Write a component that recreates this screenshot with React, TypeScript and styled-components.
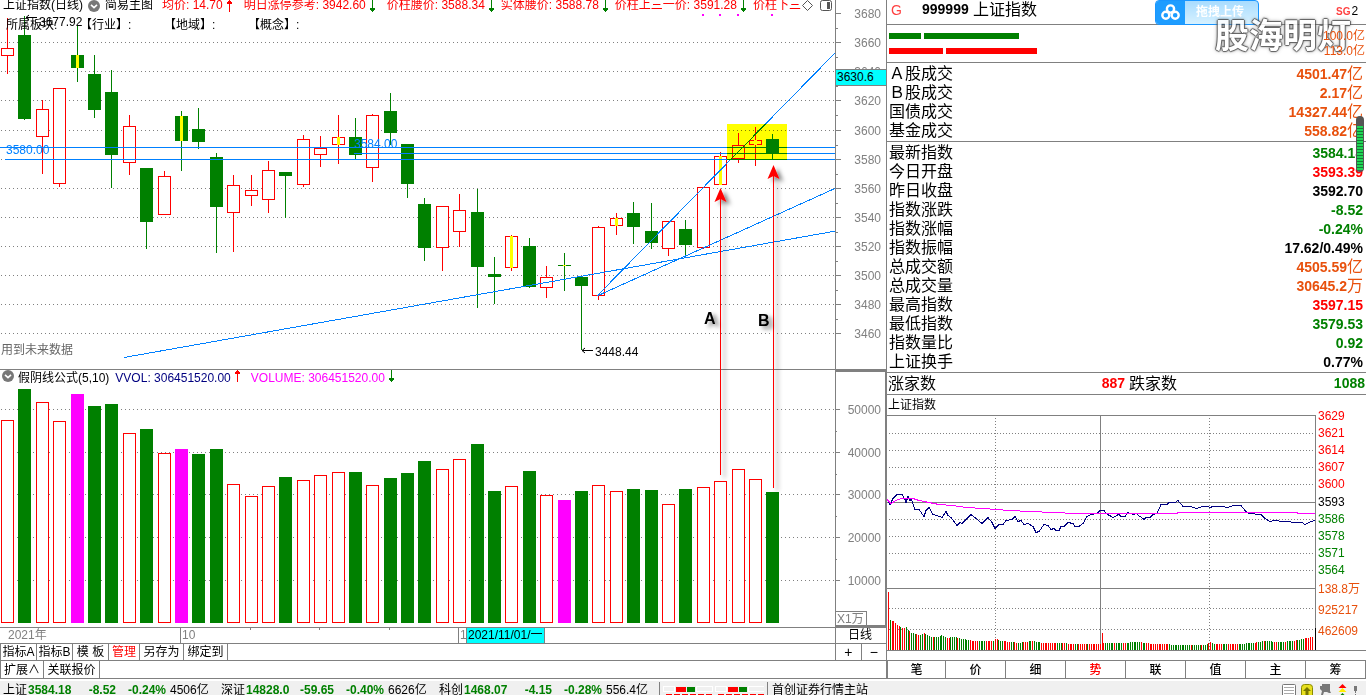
import React from "react";
import styled, { createGlobalStyle } from "styled-components";

const FONT = '"Liberation Sans", "Noto Sans CJK SC", sans-serif';
const RED = "#ff0000";
const GREEN = "#008000";
const GRAY = "#808080";
const BLUE = "#0080ff";
const ORANGE = "#e8500c";
const MAGENTA = "#ff00ff";
const NAVY = "#000080";

const GlobalStyle = createGlobalStyle`
  * { box-sizing: border-box; }
  body { margin: 0; background: #fff; color: #000; font: 12px/14px ${FONT}; }
  button { font: inherit; color: inherit; background: none; border: 0; padding: 0; margin: 0; cursor: pointer; }
  svg { display: block; flex: none; }
  svg text { font-family: ${FONT}; font-size: 12px; }
`;

/* ---------- frame ---------- */

const Terminal = styled.div`
  height: 100vh;
  overflow: hidden;
  display: flex;
  flex-direction: column;
`;
const Workspace = styled.main`
  display: grid;
  grid-template-columns: minmax(0, 1fr) 480px;
  flex: none;
`;
const Charts = styled.section`
  position: relative;
  display: flex;
  flex-direction: column;
  min-width: 0;
`;
const Pane = styled.div`
  display: grid;
  grid-template-columns: minmax(0, 1fr) 51px;
`;
const PricePane = styled(Pane)`
  height: 370px;
  border-bottom: 1px solid ${GRAY};
`;
const VolumePane = styled(Pane)`
  height: 257px;
`;
const Canvas = styled.div`
  position: relative;
  min-width: 0;
  overflow: hidden;
`;
const Plot = styled.svg`
  width: 100%;
  overflow: hidden;
`;
const Overlay = styled.svg`
  position: absolute;
  left: 0;
  top: 0;
  pointer-events: none;
`;
const PriceAxis = styled.div`
  position: relative;
  border-left: 1px solid ${GRAY};
`;
const PriceTag = styled.div`
  position: absolute;
  left: 0;
  right: 0;
  top: 69px;
  height: 17px;
  line-height: 15px;
  padding-left: 1px;
  background: #00ffff;
  border: solid ${GRAY};
  border-width: 1px 0;
`;
const VolumeAxis = styled.div`
  position: relative;
  border: 2px solid ${GRAY};
  border-left-width: 1px;
  margin-right: -1px;
`;
const Unit = styled.div`
  position: absolute;
  left: 0;
  bottom: 0;
  width: 31px;
  height: 14px;
  line-height: 15px;
  padding-left: 1px;
  color: ${GRAY};
  border: solid ${GRAY};
  border-width: 1px 1px 0 0;
`;

/* ---------- legends ---------- */

const Legend = styled.div`
  display: flex;
  white-space: nowrap;
`;
const PriceLegend = styled(Legend)`
  position: absolute;
  left: 0;
  right: 0;
  top: 0;
  height: 10px;
  line-height: 10px;
  padding: 0 3px;
`;
const LegendItems = styled.div`
  display: flex;
  flex: 1;
  min-width: 0;
  overflow: hidden;
  height: 12px;
  gap: 6px;
`;
const LegendTools = styled.div`
  display: flex;
  gap: 7px;
  padding-left: 1px;
  background: #fff;
`;
const ToolButton = styled.button`
  display: block;
  height: 12px;
`;
const VolumeLegend = styled(Legend)`
  height: 16px;
  line-height: 16px;
  padding-left: 2px;
`;
const Name = styled.span`
  display: flex;
  gap: 4px;
`;
const MainName = styled(Name)`
  gap: 5px;
  margin-right: 3px;
`;
const Reading = styled.span<{ $color: string; $wide?: boolean }>`
  display: flex;
  flex: none;
  gap: 3px;
  margin-right: ${(p) => (p.$wide ? 5 : 0)}px;
  color: ${(p) => p.$color};
`;
const VolumeReading = styled(Reading)`
  margin-left: 6px;
  & + & { margin-left: 10px; }
`;
const SectorLine = styled.div`
  position: absolute;
  left: 6px;
  top: 18px;
  white-space: pre;
  display: flex;
`;
const Sector = styled.span<{ $first?: boolean }>`
  width: ${(p) => (p.$first ? 74 : 84)}px;
`;

const Disc = () => (
  <svg width="12" height="12" viewBox="0 0 12 12">
    <circle cx="6" cy="6" r="6" fill="#787878" />
    <path d="M3 4.8 6 7.6 9 4.8" fill="none" stroke="#fff" strokeWidth="1.6" />
  </svg>
);
const Trend = ({ up }: { up?: boolean }) => (
  <svg width="7" height="12" viewBox="0 0 7 12" shapeRendering="crispEdges">
    {up ? (
      <path d="M3 0h1v1h1v1h1v2H4v8H3V4H1V2h1V1h1z" fill={RED} />
    ) : (
      <path d="M3 0h1v8h2v2H5v1H4v1H3v-1H2v-1H1V8h2z" fill={GREEN} />
    )}
  </svg>
);

/* ---------- price chart ---------- */

type Kind = "r" | "g" | "ry" | "gy";
type Candle = [Kind, number, number, number, number];

// kind, wick top, body top, body bottom, wick bottom
const CANDLES: Candle[] = [
  ["r", 18, 48, 56, 74], ["g", 16, 35, 119, 120], ["r", 100, 109, 137, 174], ["r", 88, 88, 184, 187],
  ["gy", 26, 55, 68, 82], ["g", 55, 74, 110, 118], ["g", 70, 92, 155, 188], ["r", 115, 126, 163, 175],
  ["g", 168, 168, 222, 249], ["r", 171, 176, 215, 215], ["gy", 111, 116, 141, 171], ["g", 108, 129, 142, 149],
  ["g", 153, 157, 207, 253], ["r", 175, 185, 213, 252], ["r", 175, 190, 196, 206], ["r", 161, 170, 200, 213],
  ["g", 172, 172, 176, 218], ["r", 135, 139, 185, 187], ["r", 136, 148, 155, 167], ["ry", 115, 137, 145, 164],
  ["g", 118, 137, 155, 159], ["r", 114, 115, 168, 182], ["g", 93, 111, 133, 145], ["g", 144, 144, 184, 198],
  ["g", 198, 204, 248, 261], ["r", 206, 206, 248, 271], ["r", 194, 210, 232, 247], ["g", 189, 212, 267, 308],
  ["g", 257, 274, 277, 304], ["ry", 235, 236, 268, 271], ["g", 238, 246, 287, 288], ["r", 266, 277, 288, 298],
  ["gy", 253, 265, 266, 291], ["g", 277, 277, 286, 350], ["r", 226, 227, 296, 300], ["ry", 213, 218, 226, 235],
  ["g", 202, 213, 227, 244], ["g", 203, 231, 243, 249], ["r", 221, 221, 249, 256], ["g", 220, 229, 245, 256],
  ["r", 187, 187, 248, 249], ["ry", 152, 156, 185, 185], ["r", 133, 145, 159, 163], ["ry", 127, 140, 145, 166],
  ["g", 134, 139, 154, 160],
];
const PRICE_GRID = [42, 71, 100, 130, 159, 188, 217, 246, 275, 304, 333];
const slot = (i: number) => Math.round(1 + 17.395 * i);

const Dotted = ({ y }: { y: number }) => (
  <line x1="1" x2="100%" y1={y + 0.5} y2={y + 0.5} stroke={GRAY} strokeDasharray="1 3" />
);

const CandleMark = ({ data, x }: { data: Candle; x: number }) => {
  const [kind, high, top, bottom, low] = data;
  const red = kind[0] === "r";
  const color = red ? RED : GREEN;
  return (
    <g>
      <rect x={x + 6} y={high} width="1" height={low - high} fill={color} />
      {red ? (
        <rect x={x + 0.5} y={top + 0.5} width="12" height={bottom - top - 1} fill="#fff" stroke={RED} />
      ) : (
        <rect x={x} y={top} width="13" height={bottom - top} fill={GREEN} />
      )}
      {kind.length > 1 && <rect x={x + 5} y={top} width="3" height={bottom - top} fill="#ffff00" />}
    </g>
  );
};

const PriceChart = () => (
  <Plot height="369" role="img" aria-label="上证指数日线">
    <g shapeRendering="crispEdges">
      {PRICE_GRID.map((y) => <Dotted key={y} y={y} />)}
      {CANDLES.map((c, i) => <CandleMark key={i} data={c} x={slot(i)} />)}
      {[702, 719, 737, 771].map((x) => <rect key={x} x={x} y="14" width="2" height="2" fill={MAGENTA} />)}
      <g stroke={BLUE}>
        <line x1="0" x2="100%" y1="147.5" y2="147.5" />
        <line x1="354" x2="100%" y1="153.5" y2="153.5" />
        <line x1="5" x2="100%" y1="159.5" y2="159.5" />
        <line x1="124" y1="357.5" x2="836" y2="231" />
        <line x1="597" y1="296" x2="836" y2="188" />
        <line x1="597" y1="296" x2="836" y2="52" />
      </g>
    </g>
    <text x="6" y="154" fill={BLUE}>3580.00</text>
    <text x="354" y="148" fill={BLUE}>3584.00</text>
    <text x="39" y="26">3677.92</text>
    <path d="M26 17.5h11M29 15l-3 2.5 3 2.5" fill="none" stroke="#000" />
    <text x="595" y="356">3448.44</text>
    <path d="M582 350.5h11M585 348l-3 2.5 3 2.5" fill="none" stroke="#000" />
    <text x="1" y="354" fill="#666">用到未来数据</text>
    <rect x="727" y="124" width="60" height="36" fill="#ffff00" style={{ mixBlendMode: "multiply" }} />
  </Plot>
);

const PriceScale = () => (
  <svg width="50" height="369">
    <g fill={GRAY} shapeRendering="crispEdges">
      {[13, ...PRICE_GRID].map((y) => <rect key={y} x="0" y={y} width="5" height="1" />)}
      {[13, ...PRICE_GRID].slice(0, -1).map((y) => <rect key={y} x="0" y={y + 15} width="2" height="1" />)}
    </g>
    {[13, ...PRICE_GRID].map((y, i) => (
      <text key={y} x="45" y={y + 5} textAnchor="end" fill={GRAY}>{3680 - i * 20}</text>
    ))}
  </svg>
);

/* ---------- volume chart ---------- */

const VOLUMES: number[] = [
  203, 234, 221, 202, 229, 217, 219, 190, 194, 170, 174, 169, 174, 139, 127, 137, 146, 143, 148, 151, 151, 138,
  145, 150, 162, 154, 164, 179, 132, 137, 152, 128, 123, 132, 138, 132, 134, 133, 119, 134, 136, 142, 154, 144, 131,
];
const SPIKES = new Set([4, 10, 32]);
const VOLUME_GRID = [23, 66, 108, 151, 194];

const VolumeChart = () => (
  <Plot height="241" role="img" aria-label="成交量" shapeRendering="crispEdges">
    {VOLUME_GRID.map((y) => <Dotted key={y} y={y} />)}
    {VOLUMES.map((h, i) => {
      const x = slot(i);
      return CANDLES[i][0][0] === "r" ? (
        <rect key={i} x={x + 0.5} y={237.5 - h} width="12" height={h - 1} fill="#fff" stroke={RED} />
      ) : (
        <rect key={i} x={x} y={237 - h} width="13" height={h} fill={SPIKES.has(i) ? MAGENTA : GREEN} />
      );
    })}
  </Plot>
);

const VolumeScale = () => (
  <svg width="48" height="253">
    <g fill={GRAY} shapeRendering="crispEdges">
      {VOLUME_GRID.map((y) => <rect key={y} x="0" y={y + 14} width="4" height="1" />)}
      {VOLUME_GRID.slice(0, -1).map((y) => <rect key={y} x="0" y={y + 36} width="1" height="1" />)}
    </g>
    {VOLUME_GRID.map((y, i) => (
      <text key={y} x="45" y={y + 19} textAnchor="end" fill={GRAY}>{50000 - i * 10000}</text>
    ))}
  </svg>
);

const Pointer = ({ x, top, bottom }: { x: number; top: number; bottom: number }) => (
  <g filter="url(#drop)" fill={RED}>
    <rect x={x} y={top + 8} width="1" height={bottom - top - 8} shapeRendering="crispEdges" />
    <path d={`M${x + 0.5} ${top}l6 14-6-3-6 3z`} />
  </g>
);

const Annotations = () => (
  <Overlay width="836" height="500">
    <defs>
      <filter id="drop" filterUnits="userSpaceOnUse" x="690" y="150" width="130" height="350">
        <feDropShadow dx="4" dy="3" stdDeviation="2" floodColor="#000" floodOpacity="0.5" />
      </filter>
    </defs>
    <Pointer x={720} top={188} bottom={475} />
    <Pointer x={773} top={165} bottom={488} />
    <g filter="url(#drop)">
      <text x="704" y="324" style={{ fontSize: 16, fontWeight: 700 }}>A</text>
      <text x="758" y="326" style={{ fontSize: 16, fontWeight: 700 }}>B</text>
    </g>
  </Overlay>
);

/* ---------- time line and button rows ---------- */

const Timeline = styled(Pane)`
  height: 16px;
  border-top: 1px solid ${GRAY};
  line-height: 15px;
`;
const Months = styled.div`
  position: relative;
  display: flex;
  color: ${GRAY};
  min-width: 0;
  overflow: hidden;
`;
const Month = styled.div<{ $width: number; $rule?: boolean }>`
  flex: none;
  width: ${(p) => p.$width}px;
  padding-left: ${(p) => (p.$rule ? 1 : 8)}px;
  border-left: ${(p) => (p.$rule ? `1px solid ${GRAY}` : "0")};
`;
const MonthTicks = styled.svg`
  position: absolute;
  left: 0;
  top: 0;
`;
const DateTag = styled.div`
  flex: none;
  width: 79px;
  padding-left: 1px;
  color: #000;
  background: #00ffff;
  border: solid ${GRAY};
  border-width: 0 1px;
  white-space: nowrap;
`;
const Period = styled.button`
  border-left: 1px solid ${GRAY};
  padding-right: 2px;
`;
const ButtonRow = styled.div`
  display: flex;
  height: 17px;
  border-top: 1px solid ${GRAY};
  border-left: 1px solid ${GRAY};
`;
const LinkRow = styled(ButtonRow)`
  height: 18px;
`;
const Cell = styled.button<{ $width: number; $active?: boolean }>`
  width: ${(p) => p.$width}px;
  border-right: 1px solid ${GRAY};
  color: ${(p) => (p.$active ? RED : "#000")};
  line-height: 16px;
  white-space: nowrap;
`;
const ZoomButtons = styled.div`
  margin-left: auto;
  width: 51px;
  display: flex;
  border-left: 1px solid ${GRAY};
`;
const ZoomButton = styled.button`
  flex: 1;
  font-size: 14px;
  line-height: 14px;
  & + & { border-left: 1px solid ${GRAY}; }
`;

/* ---------- quote panel ---------- */

const Quote = styled.aside`
  position: relative;
  border-left: 1px solid ${GRAY};
  display: flex;
  flex-direction: column;
`;
const QuoteHead = styled.header`
  height: 25px;
  border-bottom: 1px solid ${GRAY};
  display: flex;
  align-items: flex-start;
  padding-right: 8px;
`;
const Flag = styled.span`
  width: 35px;
  padding-left: 4px;
  font-size: 14px;
  line-height: 20px;
  color: #ff4040;
`;
const Code = styled.b`
  width: 51px;
  font-size: 14px;
  line-height: 18px;
`;
const Title = styled.h1`
  margin: 0;
  font-size: 16px;
  line-height: 20px;
  font-weight: 400;
`;
const Upload = styled.button`
  margin-left: auto;
  display: flex;
  width: 104px;
  height: 25px;
  margin-bottom: -1px;
  z-index: 1;
  border: 1px solid #1a96ff;
  border-radius: 4px;
  overflow: hidden;
  background: linear-gradient(#a8dcff, #d6f1ff);
  color: #fff;
  font-weight: 700;
  line-height: 23px;
`;
const UploadIcon = styled.span`
  width: 29px;
  height: 23px;
  margin-right: 11px;
  padding: 3px 5px;
  background: #1e9dff;
`;
const Grade = styled.span`
  display: flex;
  gap: 1px;
  width: 22px;
  margin-left: 77px;
  line-height: 23px;
  white-space: nowrap;
`;
const GradeMark = styled.b`
  font-size: 10px;
  color: #ff4040;
`;
const Flow = styled.div`
  height: 38px;
  border-bottom: 1px solid ${GRAY};
  padding: 3px 1px 0 2px;
`;
const FlowRow = styled.div<{ $color: string }>`
  display: flex;
  align-items: center;
  gap: 3px;
  height: 15px;
  color: ${ORANGE};
  & > i { height: 6px; background: ${(p) => p.$color}; }
`;
const FlowBar = styled.i<{ $width: number }>`
  width: ${(p) => p.$width}px;
`;
const FlowValue = styled.span`
  position: relative;
  z-index: 3;
  margin-left: auto;
`;
const Watermark = styled.div`
  position: absolute;
  z-index: 2;
  left: 328px;
  top: 15px;
  font-size: 34px;
  line-height: 42px;
  font-weight: 700;
  color: #fff;
  text-shadow: 1px 0 1px #444, -1px 0 1px #444, 0 1px 1px #444, 0 -1px 1px #444, 0 0 4px #777;
  white-space: nowrap;
  opacity: 0.85;
  pointer-events: none;
`;
const Meter = styled.div`
  position: absolute;
  right: 2px;
  top: 116px;
  width: 8px;
  height: 56px;
  padding: 10px 1px 2px;
  border-radius: 4px;
  background: #555;
`;
const MeterFill = styled.div`
  height: 44px;
  background: repeating-linear-gradient(#1fd655 0 2px, #157a35 2px 3px);
`;
const Figures = styled.table`
  width: 100%;
  border-collapse: separate;
  border-spacing: 0;
  border-bottom: 1px solid ${GRAY};
  padding: 1px 3px 1px 2px;
  line-height: 18px;
  font-size: 16px;
  th { padding: 0; font-weight: 400; text-align: left; height: 19px; }
`;
const Figure = styled.td<{ $color: string }>`
  padding: 0;
  height: 19px;
  text-align: right;
  color: ${(p) => p.$color};
  b { font-size: 14px; line-height: 14px; }
`;
const Breadth = styled.div`
  display: grid;
  grid-template-columns: 237px 1fr;
  column-gap: 4px;
  height: 22px;
  padding: 0 1px;
  border-bottom: 1px solid ${GRAY};
  font-size: 16px;
  line-height: 21px;
`;
const BreadthItem = styled.div<{ $color: string }>`
  display: flex;
  justify-content: space-between;
  b { font-size: 14px; color: ${(p) => p.$color}; }
`;
const IntradayTitle = styled.div`
  height: 20px;
  line-height: 20px;
  padding-left: 1px;
`;
const Intraday = styled.svg`
  overflow: visible;
`;
const Tabs = styled.nav`
  display: grid;
  grid-template-columns: 58px repeat(7, 60px);
  height: 18px;
  margin-top: 9px;
  border-top: 1px solid ${GRAY};
  border-left: 1px solid ${GRAY};
  overflow: hidden;
`;
const Tab = styled.button<{ $active?: boolean }>`
  border-right: 1px solid ${GRAY};
  line-height: 19px;
  font-weight: 500;
  color: ${(p) => (p.$active ? RED : "#000")};
`;

type Row = [string, string, string, string?];
const TURNOVER: Row[] = [
  ["Ａ股成交", "4501.47", ORANGE, "亿"],
  ["Ｂ股成交", "2.17", ORANGE, "亿"],
  ["国债成交", "14327.44", ORANGE, "亿"],
  ["基金成交", "558.82", ORANGE, "亿"],
];
const INDEX: Row[] = [
  ["最新指数", "3584.18", GREEN],
  ["今日开盘", "3593.39", RED],
  ["昨日收盘", "3592.70", "#000"],
  ["指数涨跌", "-8.52", GREEN],
  ["指数涨幅", "-0.24%", GREEN],
  ["指数振幅", "17.62/0.49%", "#000"],
  ["总成交额", "4505.59", ORANGE, "亿"],
  ["总成交量", "30645.2", ORANGE, "万"],
  ["最高指数", "3597.15", RED],
  ["最低指数", "3579.53", GREEN],
  ["指数量比", "0.92", GREEN],
  ["上证换手", "0.77%", "#000"],
];

const FigureTable = ({ rows }: { rows: Row[] }) => (
  <Figures>
    <tbody>
      {rows.map(([label, value, color, unit]) => (
        <tr key={label}>
          <th scope="row">{label}</th>
          <Figure $color={color}><b>{value}</b>{unit}</Figure>
        </tr>
      ))}
    </tbody>
  </Figures>
);

/* ---------- intraday chart ---------- */

const PRICE_LINE =
  "0,84 3,89 6,83 10,79 15,79 18,84 19,87 21,81 23,85 24,83 28,94 32,94 37,101 39,95 42,92 46,99 50,100 55,102 59,96 61,100 64,102 70,110 73,107 75,108 78,105 84,99 88,102 95,108 98,105 101,102 105,107 108,113 112,109 116,109 119,105 125,104 128,101 131,106 134,105 137,109 141,108 146,111 149,117 152,116 157,109 161,110 164,114 167,113 169,115 172,115 174,111 177,111 181,107 186,108 188,111 192,111 196,108 200,101 204,99 210,98 213,95 217,95 219,98 226,102 230,100 231,98 234,101 238,101 241,97 246,99 249,98 257,104 259,102 263,102 266,99 270,98 274,89 280,89 282,87 288,87 291,85 296,91 303,91 310,93 315,91 321,91 323,92 326,91 335,91 341,92 346,90 354,90 358,95 362,98 374,99 378,103 383,106 387,105 396,106 402,106 406,107 415,107 418,109 424,106 428,105";
const AVERAGE_LINE =
  "0,84 4,88 9,85 14,83 26,83 32,85 42,87 52,89 66,90 79,92 96,93 109,94 122,95 144,96 166,97 189,98 289,98 292,97 409,97 412,98 428,98";
const ENVELOPE: [number, number][] = [
  [1, 58], [2, 31], [5, 29], [7, 28], [9, 25], [13, 23], [16, 21], [20, 23], [21, 20], [23, 17], [26, 17], [32, 15],
  [37, 17], [41, 14], [46, 13], [52, 13], [54, 15], [59, 12], [67, 13], [76, 11], [86, 9], [107, 9], [109, 12],
  [112, 9], [124, 8], [132, 7], [144, 9], [156, 7], [172, 7], [186, 6], [214, 6], [215, 17], [216, 7], [232, 7],
  [252, 8], [266, 6], [299, 5], [319, 5], [323, 8], [327, 6], [352, 6], [366, 7], [376, 9], [392, 8], [406, 9],
  [416, 11], [424, 13],
];
// run lengths of same-coloured minute bars, starting with red
const RUNS = [
  1, 1, 5, 1, 2, 2, 1, 3, 2, 2, 1, 4, 1, 7, 2, 4, 1, 6, 5, 4, 4, 1, 2, 3, 4, 2, 2, 3, 3, 2, 1, 4, 9, 3, 2, 1, 4, 2,
  5, 1, 9, 5, 1, 4, 2, 8, 1, 2, 13, 12, 1, 5, 1, 3, 2, 2, 4, 3, 6, 9, 2, 3, 1, 5, 2, 4, 1, 4, 2, 11, 4,
];
const RUN_COLORS = RUNS.flatMap((n, i) => Array<string>(n).fill(i % 2 ? GREEN : RED));

const heightAt = (x: number) => {
  const k = ENVELOPE.findIndex(([px]) => px >= x);
  if (k <= 0) return ENVELOPE[k === 0 ? 0 : ENVELOPE.length - 1][1];
  const [x0, h0] = ENVELOPE[k - 1];
  const [x1, h1] = ENVELOPE[k];
  return Math.round(h0 + ((h1 - h0) * (x - x0)) / (x1 - x0));
};
const MINUTES = Array.from({ length: 239 }, (_, i) => {
  const x = 1 + Math.round(i * 1.78);
  return { x, h: heightAt(x), color: i > 233 ? RED : RUN_COLORS[i] ?? GREEN };
});
const LEVELS: [number, string, string][] = [
  [0, "3629", RED], [17, "3621", RED], [34, "3614", RED], [51, "3607", RED], [68, "3600", RED], [86, "3593", "#000"],
  [103, "3586", GREEN], [120, "3578", GREEN], [137, "3571", GREEN], [154, "3564", GREEN], [173, "138.8万", ORANGE],
  [194, "925217", ORANGE], [215, "462609", ORANGE],
];

const IntradayChart = () => (
  <Intraday width="479" height="236" role="img" aria-label="上证指数分时">
    <g shapeRendering="crispEdges" fill="none" stroke={GRAY}>
      {[18, 35, 52, 69, 104, 121, 138, 155, 193, 214].map((y) => (
        <line key={y} x1="2" x2="428" y1={y + 0.5} y2={y + 0.5} strokeDasharray="1 2" />
      ))}
      {[108, 322].map((x) => (
        <line key={x} x1={x + 0.5} x2={x + 0.5} y1="3" y2="235" strokeDasharray="1 2" />
      ))}
      <path d="M0 .5H428.5V236M213.5 0V235M0 87.5H428M0 173.5H428M0 235.5H479" />
      {MINUTES.map((m, i) => (
        <rect key={i} x={m.x} y={235 - m.h} width="1" height={m.h} fill={m.color} stroke="none" />
      ))}
      <rect x="428" y="213" width="1" height="22" fill="#000" stroke="none" />
      <polyline points={PRICE_LINE} stroke={NAVY} transform="translate(0 .5)" />
      <polyline points={AVERAGE_LINE} stroke={MAGENTA} transform="translate(0 .5)" />
    </g>
    {LEVELS.map(([y, label, color]) => (
      <text key={label} x="431" y={y + 5} fill={color}>{label}</text>
    ))}
  </Intraday>
);

/* ---------- status bar ---------- */

const StatusBar = styled.footer`
  flex: none;
  display: flex;
  height: 26px;
  padding: 0 0 0 3px;
  border-top: 1px solid ${GRAY};
  box-shadow: inset 0 2px 0 #fff;
  background: #f0f0f0;
  line-height: 23px;
  white-space: nowrap;
`;
const Ticker = styled.div`
  width: 218px;
  display: grid;
  grid-template-columns: 25px 46px 42px 50px 1fr;
  b { color: ${GREEN}; }
  b + b { text-align: right; }
  & > :last-child { padding-left: 4px; }
`;
const Lights = styled.div`
  display: flex;
  padding: 4px 3px 0;
  margin-left: 2px;
  border: solid ${GRAY};
  border-width: 0 1px;
  margin-top: 3px;
`;
const Station = styled.span`
  padding-left: 4px;
`;
const Tray = styled.div`
  margin-left: auto;
  padding: 4px 8px 0 0;
`;

const LightStrip = () => (
  <svg width="101" height="14" shapeRendering="crispEdges">
    {[0, 52].map((x) => (
      <g key={x} transform={`translate(${x} 0)`}>
        <path d="M.5.5h11v5h-11zM33.5.5h16v5h-16z" fill="#f0f0f0" stroke="#fff" />
        <rect x="13" y="1" width="10" height="5" fill={RED} />
        <rect x="24" y="1" width="8" height="5" fill={GREEN} />
        {[0, 8, 16, 24, 32, 40].map((d) => (
          <path key={d} d={`M${d + 3} 8h6v2h-6zM${d + 3} 11h6v2h-6z`} fill={RED} />
        ))}
      </g>
    ))}
  </svg>
);

const TrayIcons = () => (
  <svg width="76" height="16" viewBox="0 0 76 16">
    <rect x=".5" y="1.5" width="13" height="16" rx="1" fill="#fff" stroke="#777" />
    <path d="M2 4.5h10M2 7.5h10M2 10.5h10M2 13.5h10" stroke="#aaa" />
    <rect x="19.5" y="1.5" width="11" height="14" rx="3" fill="#e8e020" stroke="#8a8a00" />
    <path d="M25 4l4 4h-2.500v4h-3V8H21z" fill="#777700" />
    <path d="M40 1h8v7l1 2h-2l-2-1h-3l-1 3h-2l1-4-2-2V3h2z" fill="#777" />
    <path d="M60.500 1l4 4h-8z" fill={RED} />
    <path d="M60.500 5l4 4h-8z" fill="#ffee00" />
    <path d="M60.500 10l4 4h-8z" fill={GREEN} />
    <path d="M72 3h3v5h-1v2h-1V8h-1zM73 11h1v1h-1z" fill="#777" />
  </svg>
);

const TICKERS = [
  ["上证", "3584.18", "-8.52", "-0.24%", "4506亿"],
  ["深证", "14828.0", "-59.65", "-0.40%", "6626亿"],
  ["科创", "1468.07", "-4.15", "-0.28%", "556.4亿"],
];

export default function App() {
  return (
    <Terminal>
      <GlobalStyle />
      <Workspace>
        <Charts>
          <PricePane>
            <Canvas>
              <PriceChart />
              <PriceLegend>
                <LegendItems>
                  <MainName><span>上证指数(日线)</span><Disc /><span>简易主图</span></MainName>
                  <Reading $color={RED} $wide>均价: 14.70<Trend up /></Reading>
                  <Reading $color={RED} $wide>明日涨停参考: 3942.60<Trend /></Reading>
                  <Reading $color={RED}>价柱腰价: 3588.34<Trend /></Reading>
                  <Reading $color={RED}>实体腰价: 3588.78<Trend /></Reading>
                  <Reading $color={RED}>价柱上三一价: 3591.28<Trend /></Reading>
                  <Reading $color={RED}>价柱下三</Reading>
                </LegendItems>
                <LegendTools>
                  <ToolButton aria-label="标记">
                    <svg width="11" height="12"><path d="M5.500 .5l5 5-5 5-5-5z" fill="#fff" stroke="#555" /></svg>
                  </ToolButton>
                  <ToolButton aria-label="侧栏">
                    <svg width="12" height="12">
                      <rect x=".5" y=".5" width="11" height="10" rx="2" fill="#fff" stroke="#555" />
                      <rect x="7" y="2" width="3" height="7" fill="#555" />
                    </svg>
                  </ToolButton>
                </LegendTools>
              </PriceLegend>
              <SectorLine>
                <Sector $first>所属板块:</Sector>
                <Sector>【行业】:</Sector>
                <Sector>【地域】:</Sector>
                <Sector>【概念】:</Sector>
              </SectorLine>
            </Canvas>
            <PriceAxis>
              <PriceScale />
              <PriceTag>3630.6</PriceTag>
            </PriceAxis>
          </PricePane>
          <VolumePane>
            <Canvas>
              <VolumeLegend>
                <Name><Disc /><span>假阴线公式(5,10)</span></Name>
                <VolumeReading $color={NAVY}>VVOL: 306451520.00<Trend up /></VolumeReading>
                <VolumeReading $color={MAGENTA}>VOLUME: 306451520.00<Trend /></VolumeReading>
              </VolumeLegend>
              <VolumeChart />
            </Canvas>
            <VolumeAxis>
              <VolumeScale />
              <Unit>X1万</Unit>
            </VolumeAxis>
          </VolumePane>
          <Timeline>
            <Months>
              <Month $width={180}>2021年</Month>
              <Month $rule $width={278}>10</Month>
              <Month $rule $width={8}>1</Month>
              <DateTag>2021/11/01/一</DateTag>
              <MonthTicks width="400" height="2" shapeRendering="crispEdges">
                <path d="M250 0h1v2h-1zM319 0h1v2h-1zM389 0h1v2h-1z" fill={GRAY} />
              </MonthTicks>
            </Months>
            <Period>日线</Period>
          </Timeline>
          <ButtonRow>
            <Cell $width={36}>指标A</Cell>
            <Cell $width={36}>指标B</Cell>
            <Cell $width={36}>模 板</Cell>
            <Cell $width={31} $active>管理</Cell>
            <Cell $width={44}>另存为</Cell>
            <Cell $width={44}>绑定到</Cell>
            <ZoomButtons>
              <ZoomButton aria-label="放大">+</ZoomButton>
              <ZoomButton aria-label="缩小">−</ZoomButton>
            </ZoomButtons>
          </ButtonRow>
          <LinkRow>
            <Cell $width={43}>扩展∧</Cell>
            <Cell $width={56}>关联报价</Cell>
          </LinkRow>
          <Annotations />
        </Charts>

        <Quote>
          <QuoteHead>
            <Flag>G</Flag>
            <Code>999999</Code>
            <Title>上证指数</Title>
            <Upload>
              <UploadIcon>
                <svg width="19" height="17" viewBox="0 0 19 17" fill="none" stroke="#fff" strokeWidth="2.400">
                  <circle cx="9.500" cy="5" r="3.600" />
                  <circle cx="4.800" cy="11.200" r="3.500" />
                  <circle cx="14.200" cy="11.200" r="3.500" />
                </svg>
              </UploadIcon>
              拖拽上传
            </Upload>
            <Grade><GradeMark>SG</GradeMark>2</Grade>
          </QuoteHead>
          <Flow>
            <FlowRow $color={GREEN}>
              <FlowBar $width={32} /><FlowBar $width={95} /><FlowValue>100.0亿</FlowValue>
            </FlowRow>
            <FlowRow $color={RED}>
              <FlowBar $width={54} /><FlowBar $width={91} /><FlowValue>113.0亿</FlowValue>
            </FlowRow>
          </Flow>
          <FigureTable rows={TURNOVER} />
          <FigureTable rows={INDEX} />
          <Breadth>
            <BreadthItem $color={RED}>涨家数<b>887</b></BreadthItem>
            <BreadthItem $color={GREEN}>跌家数<b>1088</b></BreadthItem>
          </Breadth>
          <IntradayTitle>上证指数</IntradayTitle>
          <IntradayChart />
          <Tabs>
            {["笔", "价", "细", "势", "联", "值", "主", "筹"].map((t) => (
              <Tab key={t} $active={t === "势"}>{t}</Tab>
            ))}
          </Tabs>
          <Watermark>股海明灯</Watermark>
          <Meter><MeterFill /></Meter>
        </Quote>
      </Workspace>
      <StatusBar>
        {TICKERS.map(([name, price, change, percent, amount]) => (
          <Ticker key={name}>
            <span>{name}</span><b>{price}</b><b>{change}</b><b>{percent}</b><span>{amount}</span>
          </Ticker>
        ))}
        <Lights><LightStrip /></Lights>
        <Station>首创证券行情主站</Station>
        <Tray><TrayIcons /></Tray>
      </StatusBar>
    </Terminal>
  );
}
